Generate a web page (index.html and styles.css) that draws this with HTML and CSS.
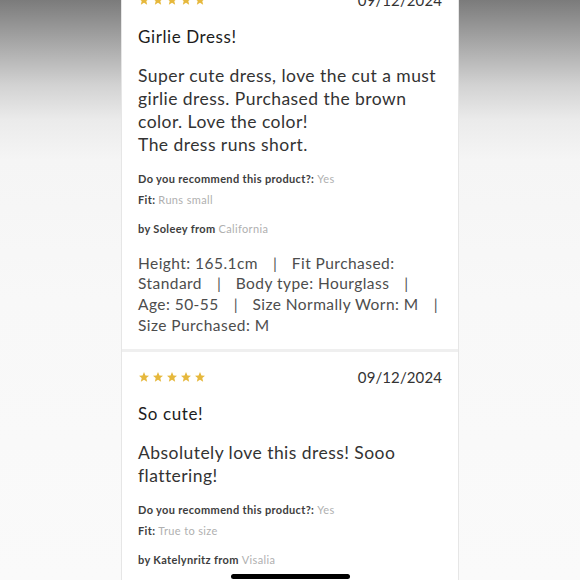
FILE: index.html
```html
<!DOCTYPE html>
<html lang="en">
<head>
<meta charset="utf-8">
<title>Reviews</title>
<link rel="stylesheet" href="styles.css">
</head>
<body>
<div class="list">
  <section class="review">
    <div class="head">
      <div class="stars">
        <svg viewBox="0 0 24 24"><path d="M12 2l2.9 6.9 7.1.6-5.4 4.7 1.7 7.3L12 17.6 5.7 21.5l1.7-7.3L2 9.5l7.1-.6z"/></svg>
        <svg viewBox="0 0 24 24"><path d="M12 2l2.9 6.9 7.1.6-5.4 4.7 1.7 7.3L12 17.6 5.7 21.5l1.7-7.3L2 9.5l7.1-.6z"/></svg>
        <svg viewBox="0 0 24 24"><path d="M12 2l2.9 6.9 7.1.6-5.4 4.7 1.7 7.3L12 17.6 5.7 21.5l1.7-7.3L2 9.5l7.1-.6z"/></svg>
        <svg viewBox="0 0 24 24"><path d="M12 2l2.9 6.9 7.1.6-5.4 4.7 1.7 7.3L12 17.6 5.7 21.5l1.7-7.3L2 9.5l7.1-.6z"/></svg>
        <svg viewBox="0 0 24 24"><path d="M12 2l2.9 6.9 7.1.6-5.4 4.7 1.7 7.3L12 17.6 5.7 21.5l1.7-7.3L2 9.5l7.1-.6z"/></svg>
      </div>
      <span class="date">09/12/2024</span>
    </div>
    <h2 class="title">Girlie Dress!</h2>
    <p class="body">Super cute dress, love the cut a must girlie dress. Purchased the brown color. Love the color!<br>The dress runs short.</p>
    <p class="meta">Do you recommend this product?: <span class="val">Yes</span></p>
    <p class="meta">Fit: <span class="val">Runs small</span></p>
    <p class="meta author">by Soleey from <span class="val">California</span></p>
    <p class="attrs">Height: 165.1cm<span class="sep">| </span>Fit Purchased: Standard<span class="sep">| </span>Body type: Hourglass<span class="sep">| </span>Age: 50-55<span class="sep">| </span>Size Normally Worn: M<span class="sep">| </span>Size Purchased: M</p>
  </section>
  <section class="review">
    <div class="head">
      <div class="stars">
        <svg viewBox="0 0 24 24"><path d="M12 2l2.9 6.9 7.1.6-5.4 4.7 1.7 7.3L12 17.6 5.7 21.5l1.7-7.3L2 9.5l7.1-.6z"/></svg>
        <svg viewBox="0 0 24 24"><path d="M12 2l2.9 6.9 7.1.6-5.4 4.7 1.7 7.3L12 17.6 5.7 21.5l1.7-7.3L2 9.5l7.1-.6z"/></svg>
        <svg viewBox="0 0 24 24"><path d="M12 2l2.9 6.9 7.1.6-5.4 4.7 1.7 7.3L12 17.6 5.7 21.5l1.7-7.3L2 9.5l7.1-.6z"/></svg>
        <svg viewBox="0 0 24 24"><path d="M12 2l2.9 6.9 7.1.6-5.4 4.7 1.7 7.3L12 17.6 5.7 21.5l1.7-7.3L2 9.5l7.1-.6z"/></svg>
        <svg viewBox="0 0 24 24"><path d="M12 2l2.9 6.9 7.1.6-5.4 4.7 1.7 7.3L12 17.6 5.7 21.5l1.7-7.3L2 9.5l7.1-.6z"/></svg>
      </div>
      <span class="date">09/12/2024</span>
    </div>
    <h2 class="title">So cute!</h2>
    <p class="body">Absolutely love this dress! Sooo flattering!</p>
    <p class="meta">Do you recommend this product?: <span class="val">Yes</span></p>
    <p class="meta">Fit: <span class="val">True to size</span></p>
    <p class="meta author">by Katelynritz from <span class="val">Visalia</span></p>
  </section>
</div>
<div class="home-indicator"></div>
</body>
</html>
```

FILE: styles.css
```css
html, body {
  margin: 0;
  padding: 0;
}

body {
  height: 580px;
  overflow: hidden;
  display: flex;
  justify-content: center;
  align-items: flex-start;
  font-family: Lato, "Open Sans", "Liberation Sans", sans-serif;
  background: linear-gradient(to bottom, #7b7b7b 0px, #a9a9a9 45px, #d2d2d2 85px, #ebebeb 120px, #f5f5f5 160px, #f8f8f8 300px, #fafafa 580px);
}

.list {
  width: 336px;
  margin-top: -25px;
  display: flex;
  flex-direction: column;
  gap: 3px;
  background: #efefef;
  border-left: 1px solid #e6e6e6;
  border-right: 1px solid #e6e6e6;
}

.review {
  background: #fff;
  padding: 15px 16px 14px;
}

.head {
  height: 20px;
  display: flex;
  align-items: center;
  justify-content: space-between;
}

.stars {
  display: flex;
  gap: 2px;
}

.stars svg {
  width: 12px;
  height: 12px;
  fill: #e6b83c;
}

.date {
  font-size: 15px;
  color: #333;
  letter-spacing: 0.1px;
}

.title {
  margin: 16px 0 0;
  font-size: 17px;
  line-height: 22px;
  font-weight: 400;
  color: #1c1c1c;
  letter-spacing: 0.6px;
}

.body {
  margin: 16px 0 0;
  font-size: 17.5px;
  line-height: 23px;
  color: #333;
  letter-spacing: 0.45px;
}

.meta {
  margin: 7px 0 0;
  font-size: 11px;
  line-height: 14px;
  font-weight: 700;
  color: #3d3d3d;
  letter-spacing: 0.35px;
}

.body + .meta {
  margin-top: 16px;
}

.meta.author {
  margin-top: 15px;
}

.val {
  font-weight: 400;
  color: #b0b0b0;
}

.attrs {
  margin: 16.5px 0 0;
  font-size: 15.5px;
  line-height: 20.7px;
  color: #4d4d4d;
  letter-spacing: 0.45px;
}

.sep {
  margin-left: 15px;
  word-spacing: 10px;
  color: #555;
}

.home-indicator {
  position: absolute;
  left: 231px;
  top: 574px;
  width: 119px;
  height: 5px;
  border-radius: 3px;
  background: #000;
}
```
